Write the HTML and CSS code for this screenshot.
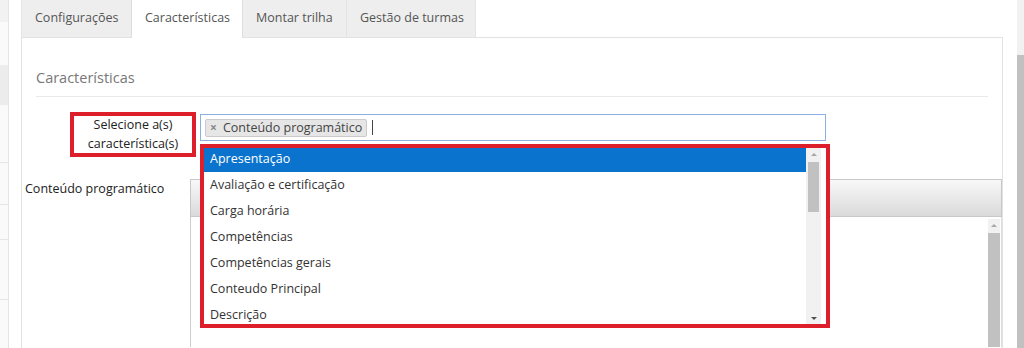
FILE: index.html
```html
<!DOCTYPE html>
<html>
<head>
  <meta charset="utf-8">
  <title>Características</title>
  <link rel="stylesheet" href="styles.css">
</head>
<body>
  <div class="page">
    <div class="sidebar">
      <div class="side-top"></div>
      <div class="side-gap"></div>
      <div class="side-band"></div>
      <div class="side-row r1"></div>
      <div class="side-row r2"></div>
      <div class="side-row r3"></div>
      <div class="side-row r4"></div>
    </div>

    <div class="content">
      <ul class="tabs">
        <li class="tab t1">Configurações</li>
        <li class="tab t2 active">Características</li>
        <li class="tab t3">Montar trilha</li>
        <li class="tab t4">Gestão de turmas</li>
      </ul>

      <div class="panel">
        <h3 class="panel-title">Características</h3>
        <div class="panel-rule"></div>

        <div class="form-row row-select">
          <label class="field-label marked">Selecione a(s)<br>característica(s)</label>
          <div class="select-box">
            <span class="tag"><span class="tag-x">×</span>Conteúdo programático</span>
            <span class="caret"></span>
          </div>
        </div>

        <div class="form-row row-editor">
          <label class="field-label plain">Conteúdo programático</label>
          <div class="editor">
            <div class="editor-toolbar"></div>
            <div class="editor-body">
              <div class="vscroll">
                <div class="arrow-up light"></div>
                <div class="vthumb"></div>
              </div>
            </div>
          </div>
        </div>

        <div class="dropdown">
          <ul class="options">
            <li class="option highlighted">Apresentação</li>
            <li class="option">Avaliação e certificação</li>
            <li class="option">Carga horária</li>
            <li class="option">Competências</li>
            <li class="option">Competências gerais</li>
            <li class="option">Conteudo Principal</li>
            <li class="option">Descrição</li>
          </ul>
          <div class="dd-scroll">
            <div class="arrow-up light"></div>
            <div class="dd-thumb"></div>
            <div class="arrow-down"></div>
          </div>
          <div class="dd-gap"></div>
        </div>
      </div>
    </div>

    <div class="page-scroll">
      <div class="page-thumb"></div>
    </div>
  </div>
</body>
</html>
```

FILE: styles.css
```css
html, body {
  margin: 0;
  padding: 0;
  height: 348px;
  overflow: hidden;
  background: #fff;
}

body {
  font-family: 'Open Sans', 'Noto Sans', sans-serif;
  font-size: 12.5px;
  color: #333;
}

.page {
  display: flex;
  height: 348px;
}

/* left menu strip */
.sidebar {
  width: 9px;
  box-sizing: border-box;
  background: #fafafa;
  border-right: 1px solid #e4e4e4;
  margin-right: 12px;
}

.side-top {
  height: 22px;
  background: #f2f2f2;
}

.side-gap {
  height: 43px;
}

.side-band {
  height: 40px;
  background: #ececec;
}

.side-row {
  border-bottom: 1px solid #e6e6e6;
}

.side-row.r1 { height: 57px; }
.side-row.r2 { height: 41px; }
.side-row.r3 { height: 34px; }
.side-row.r4 { height: 59px; }

/* main area */
.content {
  width: 982px;
  display: flex;
  flex-direction: column;
}

.tabs {
  list-style: none;
  margin: 0 0 -1px 0;
  padding: 0;
  display: flex;
  height: 38px;
}

.tab {
  height: 37px;
  line-height: 36px;
  box-sizing: border-box;
  padding: 0 13px;
  background: #eeeeee;
  color: #555;
  white-space: nowrap;
  border: 1px solid #e4e4e4;
  border-top: none;
  border-bottom: none;
  margin-right: -1px;
}

.tab.t1 { width: 111px; }
.tab.t2 { width: 112px; }
.tab.t3 { width: 105px; }
.tab.t4 { width: 130px; }

.tab.active {
  background: #fff;
  height: 38px;
  position: relative;
  z-index: 2;
  border-color: #dedede;
}

.panel {
  flex: 1;
  position: relative;
  border: 1px solid #e2e2e2;
  border-bottom: none;
}

.panel-title {
  margin: 0;
  padding: 30px 0 0 14px;
  font-size: 14.5px;
  line-height: 20px;
  font-weight: 400;
  color: #777;
}

.panel-rule {
  margin: 8px 14px 0 14px;
  border-top: 1px solid #e9e9e9;
}

.form-row {
  display: flex;
  align-items: flex-start;
}

.row-select {
  margin-top: 15px;
}

.field-label {
  font-weight: 400;
  color: #222;
}

.field-label.marked {
  margin-left: 48px;
  width: 126px;
  height: 45px;
  box-sizing: border-box;
  border: 4px solid #dc1f2b;
  text-align: center;
  line-height: 18.5px;
}

.select-box {
  margin: 2px 0 0 4px;
  width: 626px;
  height: 27px;
  box-sizing: border-box;
  border: 1px solid #8cb0e0;
  display: flex;
  align-items: center;
  padding-left: 4px;
}

.tag {
  display: inline-flex;
  align-items: center;
  height: 18px;
  box-sizing: border-box;
  padding: 0 5px 0 4px;
  width: 162px;
  white-space: nowrap;
  background: #e6e6e6;
  border: 1px solid #cbcbcb;
  border-radius: 2px;
  color: #444;
  line-height: 16px;
}

.tag-x {
  color: #888;
  font-size: 12px;
  font-weight: 700;
  margin-right: 6px;
}

.caret {
  display: inline-block;
  width: 1px;
  height: 15px;
  background: #444;
  margin-left: 5px;
}

.row-editor {
  margin-top: 22px;
}

.field-label.plain {
  width: 168px;
  box-sizing: border-box;
  padding-left: 3px;
  line-height: 20px;
}

.editor {
  width: 812px;
}

.editor-toolbar {
  height: 38px;
  box-sizing: border-box;
  border: 1px solid #c8c8c8;
  background: linear-gradient(#f8f8f8, #dadada);
}

.editor-body {
  height: 128px;
  border-left: 1px solid #cccccc;
  border-right: 1px solid #dcdcdc;
  display: flex;
  justify-content: flex-end;
  padding-top: 2px;
}

.vscroll {
  width: 12px;
  margin-right: 1px;
  display: flex;
  flex-direction: column;
  background: #f1f1f1;
}

.vthumb {
  flex: 1;
  background: #c1c1c1;
}

.arrow-up, .arrow-down {
  height: 14px;
  position: relative;
}

.arrow-up::after, .arrow-down::after {
  content: "";
  position: absolute;
  left: 50%;
  top: 5px;
  margin-left: -3px;
  border-left: 3px solid transparent;
  border-right: 3px solid transparent;
}

.arrow-up::after {
  border-bottom: 3px solid #a8a8a8;
}

.arrow-down::after {
  border-top: 3px solid #505050;
}

/* open select dropdown, drawn over the editor */
.dropdown {
  position: absolute;
  left: 178px;
  top: 106px;
  width: 630px;
  height: 184px;
  box-sizing: border-box;
  border: 4px solid #dc1f2b;
  background: #fff;
  display: flex;
  z-index: 5;
  overflow: hidden;
}

.options {
  list-style: none;
  margin: -2px 0 0 0;
  padding: 0;
  width: 602px;
}

.option {
  height: 26px;
  line-height: 26px;
  padding-left: 6px;
  color: #333;
}

.option.highlighted {
  background: #0a73cd;
  color: #fff;
}

.dd-scroll {
  width: 15px;
  background: #f1f1f1;
  display: flex;
  flex-direction: column;
}

.dd-thumb {
  margin: 0 2px;
  height: 50px;
  background: #c1c1c1;
}

.dd-scroll .arrow-down {
  margin-top: auto;
  height: 12px;
}

.dd-gap {
  width: 5px;
}

/* browser scrollbar on the right */
.page-scroll {
  margin-left: auto;
  width: 7px;
  background: #f1f1f1;
}

.page-thumb {
  margin-top: 55px;
  height: 293px;
  background: #c1c1c1;
}
```
